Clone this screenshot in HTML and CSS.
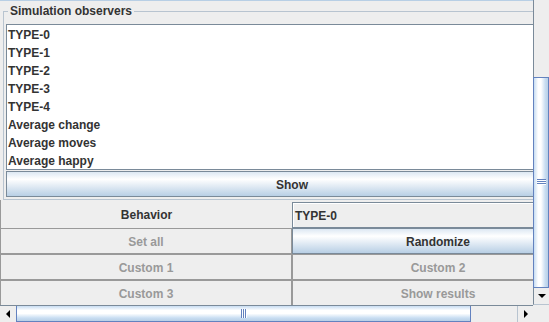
FILE: index.html
```html
<!doctype html>
<html>
<head>
 <meta http-equiv="Content-Type" content="text/html; charset=utf-8">
 <title>Simulation observers</title>
 <link rel="stylesheet" href="styles.css">
</head>
<body>
  <div class="window">
    <div class="viewport">
      <div class="content">
        <div class="topline"></div>
        <fieldset class="observers">
          <legend>Simulation observers</legend>
          <ul class="list">
            <li>TYPE-0</li>
            <li>TYPE-1</li>
            <li>TYPE-2</li>
            <li>TYPE-3</li>
            <li>TYPE-4</li>
            <li>Average change</li>
            <li>Average moves</li>
            <li>Average happy</li>
          </ul>
          <button class="btn show">Show</button>
        </fieldset>
        <div class="controls">
          <div class="label">Behavior</div>
          <div class="field">TYPE-0</div>
          <button class="btn off" disabled>Set all</button>
          <button class="btn">Randomize</button>
          <button class="btn off" disabled>Custom 1</button>
          <button class="btn off" disabled>Custom 2</button>
          <button class="btn off" disabled>Custom 3</button>
          <button class="btn off" disabled>Show results</button>
        </div>
      </div>
    </div>

    <!-- vertical scrollbar -->
    <div class="vbar">
      <div class="vtrack"></div>
      <div class="vthumb"><span class="grip-h"></span></div>
      <div class="arrow down">
        <svg width="8" height="4" viewBox="0 0 8 4"><polygon points="0,0 8,0 4,4" fill="#000"/></svg>
      </div>
    </div>

    <!-- horizontal scrollbar -->
    <div class="hbar">
      <div class="arrow left">
        <svg width="4" height="8" viewBox="0 0 4 8"><polygon points="4,0 4,8 0,4" fill="#000"/></svg>
      </div>
      <div class="hthumb"><span class="grip-v"></span></div>
      <div class="htrack"></div>
      <div class="arrow right">
        <svg width="4" height="8" viewBox="0 0 4 8"><polygon points="0,0 0,8 4,4" fill="#000"/></svg>
      </div>
    </div>
    <div class="corner"></div>
  </div>
</body>
</html>
```

FILE: styles.css
```css
html,body{margin:0;padding:0;width:100%;height:100%;background-color:#eeeeee;overflow:hidden;}
body,ul,li,button,fieldset,legend{font-family:"Liberation Sans",Arial,sans-serif;font-size:12px;font-weight:bold;color:#333333;}
.window{display:grid;grid-template-columns:533px 16px;grid-template-rows:305px 17px;width:549px;height:322px;}

.viewport{overflow:hidden;background-color:#eeeeee;}
.content{width:584px;}
.topline{height:1px;background-color:#b8cfe5;}

.observers{margin:3px 3px 0 3px;padding:6px 2px 2px 2px;border:1px solid #b8c4d0;min-width:0;}
.observers legend{margin-left:2px;padding:0 2px;line-height:15px;height:14px;}
.list{margin:0;padding:0;list-style:none;background-color:#ffffff;border:1px solid #7a8a99;}
.list li{height:18px;line-height:20px;padding-left:1px;white-space:nowrap;}

.btn{display:block;margin:0;padding:2px 0 0 0;height:26px;border:1px solid #7a8a99;background:linear-gradient(#dde8f3 0%,#ffffff 30%,#b8cfe5 100%);text-align:center;cursor:pointer;}
.btn.show{width:100%;margin-top:1px;}
.btn.off{border-color:#999999;background:#eeeeee;color:#999999;cursor:default;}

.controls{display:grid;grid-template-columns:292px 292px;grid-template-rows:28px 26px 26px 26px;}
.controls .btn{width:100%;height:100%;}
.label{border-left:1px solid #999999;text-align:center;line-height:31px;}
.field{margin-top:2px;border:1px solid #7a8a99;box-shadow:inset 1px 1px 0 #ffffff;padding:2px 0 0 2px;line-height:23px;background-color:#eeeeee;}

/* scrollbars */
.vbar{display:flex;flex-direction:column;background-color:#eeeeee;}
.vtrack{height:77px;border-left:1px solid #7a8a99;}
.vthumb{height:211px;border:1px solid #6382bf;background:linear-gradient(to right,#c8ddf2 0%,#ffffff 30%,#ffffff 50%,#c8ddf2 80%,#b8cfe5 100%);display:flex;align-items:center;justify-content:center;}
.grip-h{width:9px;height:6px;margin-left:1px;background:repeating-linear-gradient(#6382bf 0 1px,#ffffff 1px 2px);}
.arrow{display:flex;align-items:center;justify-content:center;background-color:#eeeeee;box-sizing:border-box;}
.arrow.down{height:17px;border-left:1px solid #7a8a99;border-bottom:1px solid #b8c4d0;}

.hbar{display:flex;background-color:#eeeeee;border-top:1px solid #7a8a99;box-sizing:border-box;}
.arrow.left{width:16px;}
.hthumb{width:455px;border:1px solid #6382bf;border-top:0;background:linear-gradient(#c8ddf2 0%,#ffffff 30%,#ffffff 50%,#c8ddf2 80%,#b8cfe5 100%);display:flex;align-items:center;justify-content:center;}
.grip-v{width:6px;height:9px;margin-left:1px;background:repeating-linear-gradient(to right,#6382bf 0 1px,#ffffff 1px 2px);}
.htrack{width:46px;}
.arrow.right{width:16px;border-left:1px solid #b8c4d0;}
.corner{background-color:#eeeeee;}
```
